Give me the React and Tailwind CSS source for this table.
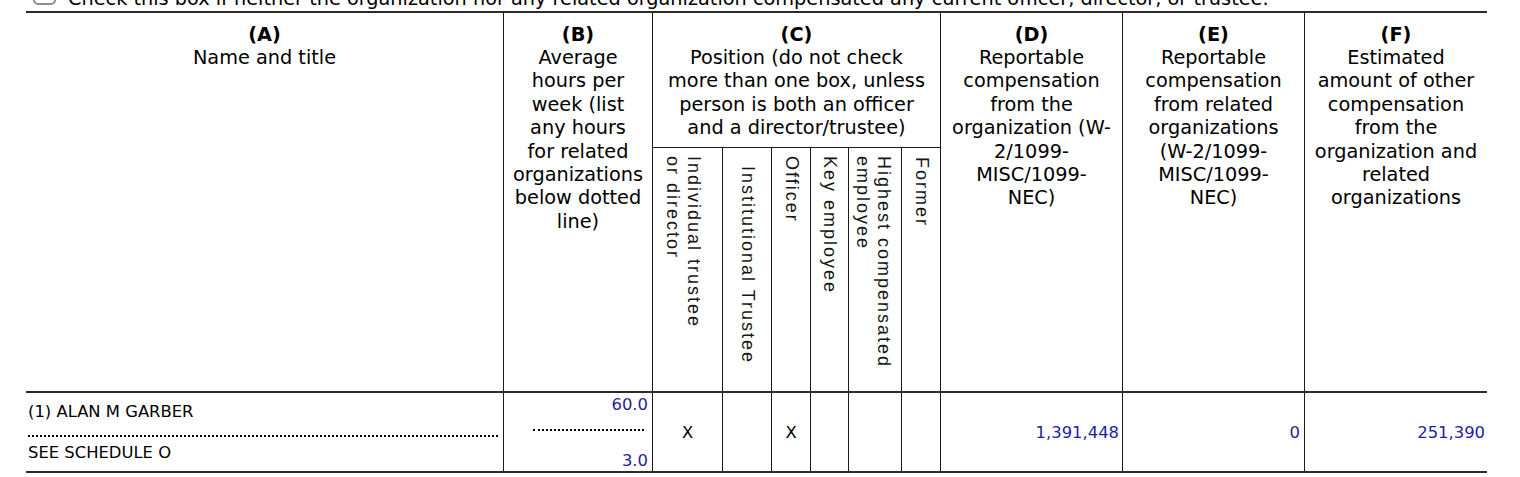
const positions = [
  { w: "w-[70px] border-r pr-[10px]", lines: ["Individual trustee", "or director"], pad: "pt-[8px]", mark: true },
  { w: "w-[49px] border-r", lines: ["Institutional Trustee"], pad: "pt-[18px]", mark: false },
  { w: "w-[39px] border-r", lines: ["Officer"], pad: "pt-[8px]", mark: true },
  { w: "w-[38px] border-r", lines: ["Key employee"], pad: "pt-[8px]", mark: false },
  { w: "w-[53px] border-r pr-[4px]", lines: ["Highest compensated", "employee"], pad: "pt-[8px]", mark: false },
  { w: "w-[38px]", lines: ["Former"], pad: "pt-[9px]", mark: false },
];

function HeadText({ letter, lines }) {
  return (
    <div className="whitespace-nowrap pt-[9.5px] text-center text-[19.3px] leading-[23.4px]">
      <div className="font-bold">({letter})</div>
      {lines.map((line) => (
        <div key={line}>{line}</div>
      ))}
    </div>
  );
}

function VerticalLabel({ lines }) {
  return (
    <div className="whitespace-nowrap font-['Liberation_Sans',Arial,sans-serif] text-[18px] leading-[21px] tracking-[2px] text-[#151515] [writing-mode:vertical-rl]">
      {lines.map((line) => (
        <div key={line}>{line}</div>
      ))}
    </div>
  );
}

export default function App() {
  return (
    <div className="h-[477px] w-[1520px] overflow-hidden bg-white pl-[26px] font-['DejaVu_Sans',Verdana,sans-serif] text-black">
      <div className="-mt-[13px] flex h-[24px] items-start">
        <span className="ml-[7px] mt-[0.5px] h-[17px] w-[23px] rounded-[5px] border-2 border-[#8c8c8c]" />
        <span className="ml-[12px] whitespace-nowrap text-[19.3px] leading-[23.4px]">
          Check this box if neither the organization nor any related organization compensated any current officer, director, or trustee.
        </span>
      </div>

      <div className="w-[1461px] border-t-2 border-[#2b2b2b]">
        {/* header */}
        <div className="flex h-[378px]">
          <div className="w-[478px] border-r border-[#1a1a1a]">
            <HeadText letter="A" lines={["Name and title"]} />
          </div>
          <div className="w-[149px] border-r border-[#1a1a1a]">
            <HeadText
              letter="B"
              lines={["Average", "hours per", "week (list", "any hours", "for related", "organizations", "below dotted", "line)"]}
            />
          </div>
          <div className="flex w-[288px] flex-col border-r border-[#1a1a1a]">
            <div className="h-[135px] border-b border-[#1a1a1a]">
              <HeadText
                letter="C"
                lines={["Position (do not check", "more than one box, unless", "person is both an officer", "and a director/trustee)"]}
              />
            </div>
            <div className="flex flex-1">
              {positions.map((p) => (
                <div key={p.lines[0]} className={`${p.w} ${p.pad} flex justify-center border-[#1a1a1a]`}>
                  <VerticalLabel lines={p.lines} />
                </div>
              ))}
            </div>
          </div>
          <div className="w-[182px] border-r border-[#1a1a1a]">
            <HeadText
              letter="D"
              lines={["Reportable", "compensation", "from the", "organization (W-", "2/1099-", "MISC/1099-", "NEC)"]}
            />
          </div>
          <div className="w-[182px] border-r border-[#1a1a1a]">
            <HeadText
              letter="E"
              lines={["Reportable", "compensation", "from related", "organizations", "(W-2/1099-", "MISC/1099-", "NEC)"]}
            />
          </div>
          <div className="w-[182px]">
            <HeadText
              letter="F"
              lines={["Estimated", "amount of other", "compensation", "from the", "organization and", "related", "organizations"]}
            />
          </div>
        </div>

        {/* row 1 */}
        <div className="flex h-[82px] border-y-2 border-[#2b2b2b] text-[16.4px] leading-[19px]">
          <div className="w-[478px] border-r border-[#1a1a1a] pl-[2px] pr-[5px] pt-[9px]">
            <div className="whitespace-nowrap">(1) ALAN M GARBER</div>
            <div className="mt-[14px] border-b-2 border-dotted border-black" />
            <div className="mt-[6px] whitespace-nowrap">SEE SCHEDULE O</div>
          </div>
          <div className="flex w-[149px] flex-col items-end border-r border-[#1a1a1a] pr-[4px] pt-[2px] text-[#1f1f9f]">
            <div>60.0</div>
            <div className="mr-[4px] mt-[15px] w-[111px] border-b-2 border-dotted border-black" />
            <div className="mt-[20px]">3.0</div>
          </div>
          <div className="flex w-[288px] border-r border-[#1a1a1a]">
            {positions.map((p) => (
              <div key={p.lines[0]} className={`${p.w.split(" ")[0]} ${p.w.includes("border-r") ? "border-r" : ""} flex items-center justify-center border-[#1a1a1a]`}>
                {p.mark ? "X" : ""}
              </div>
            ))}
          </div>
          <div className="flex w-[182px] items-center justify-end border-r border-[#1a1a1a] pr-[3px] text-[#1f1f9f]">
            1,391,448
          </div>
          <div className="flex w-[182px] items-center justify-end border-r border-[#1a1a1a] pr-[4px] text-[#1f1f9f]">
            0
          </div>
          <div className="flex w-[182px] items-center justify-end pr-[2px] text-[#1f1f9f]">251,390</div>
        </div>
      </div>
    </div>
  );
}
